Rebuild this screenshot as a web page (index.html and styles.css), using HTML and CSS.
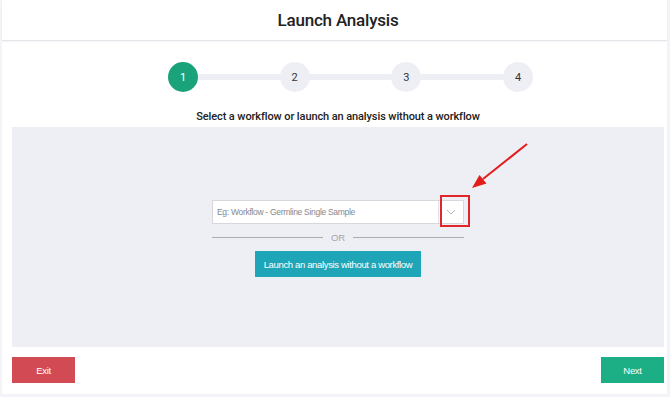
FILE: index.html
```html
<!DOCTYPE html>
<html lang="en">
<head>
    <meta charset="UTF-8">
    <meta name="viewport" content="width=device-width, initial-scale=1.0">
    <title>Launch Analysis</title>
    <link rel="stylesheet" href="styles.css">
</head>

<body>
    <div class="card">
        <div class="header">
            <h1>Launch Analysis</h1>
        </div>

        <div class="steps">
            <div class="track"></div>
            <div class="step active">1</div>
            <div class="step">2</div>
            <div class="step">3</div>
            <div class="step">4</div>
        </div>

        <h2 class="subtitle">Select a workflow or launch an analysis without a workflow</h2>

        <div class="panel">
            <div class="select-wrap">
                <div class="select">
                    <span class="placeholder">Eg: Workflow - Germline Single Sample</span>
                    <span class="caret">
                        <svg width="10" height="6" viewBox="0 0 10 6"><path d="M1 1l4 4 4-4" fill="none" stroke="#b5b8c0" stroke-width="1"/></svg>
                    </span>
                </div>
                <div class="highlight"></div>
            </div>

            <div class="divider"><span>OR</span></div>

            <button class="launch">Launch an analysis without a workflow</button>

            <svg class="arrow" width="70" height="60" viewBox="0 0 70 60">
                <line x1="67" y1="3" x2="23" y2="38" stroke="#e31b1b" stroke-width="2"/>
                <polygon points="12,47 19.5,34 26.5,42.5" fill="#e31b1b"/>
            </svg>
        </div>

        <div class="footer">
            <button class="btn exit">Exit</button>
            <button class="btn next">Next</button>
        </div>
    </div>
</body>

</html>
```

FILE: styles.css
```css
body {
    font-family: Roboto, Arial, sans-serif;
    background-color: #f3f4f8;
    margin: 0;
}

.card {
    background: #fff;
    margin: 0 3px 0 2px;
    height: 394px;
    display: flex;
    flex-direction: column;
}

.header {
    height: 40px;
    padding-left: 7px;
    border-bottom: 1px solid #e3e4ea;
    box-shadow: 0 1px 2px rgba(0, 0, 0, 0.05);
    display: flex;
    justify-content: center;
    align-items: center;
}

.header h1 {
    margin: 0;
    font-size: 17px;
    font-weight: 500;
    color: #222;
    letter-spacing: -0.2px;
}

.steps {
    position: relative;
    width: 365px;
    margin: 21px 0 0 166px;
    display: flex;
    justify-content: space-between;
}

.track {
    position: absolute;
    left: 15px;
    right: 15px;
    top: 12px;
    height: 6px;
    background: #eeeff4;
}

.step {
    position: relative;
    width: 30px;
    height: 30px;
    border-radius: 50%;
    background: #eeeff4;
    color: #333;
    font-size: 11px;
    display: flex;
    justify-content: center;
    align-items: center;
}

.step.active {
    background: #1aa37a;
    color: #fff;
}

.subtitle {
    margin: 18px 0 0;
    padding-left: 7px;
    text-align: center;
    font-size: 11px;
    font-weight: 500;
    color: #222;
    line-height: 14px;
    letter-spacing: -0.1px;
}

.panel {
    position: relative;
    margin: 3px 3px 0 10px;
    height: 220px;
    background: #eeeff4;
    display: flex;
    flex-direction: column;
    align-items: center;
    justify-content: center;
}

.select-wrap {
    position: relative;
    margin-top: 3px;
}

.select {
    width: 250px;
    height: 22px;
    background: #fff;
    border: 1px solid #d6d8de;
    display: flex;
    align-items: center;
}

.placeholder {
    flex: 1;
    padding-left: 4px;
    font-family: "Liberation Sans", Arial, sans-serif;
    font-size: 8.5px;
    letter-spacing: -0.3px;
    color: #858890;
}

.caret {
    width: 24px;
    height: 100%;
    border-left: 1px solid #e0e2e7;
    display: flex;
    justify-content: center;
    align-items: center;
}

.highlight {
    position: absolute;
    left: 228px;
    top: -5px;
    width: 26px;
    height: 28px;
    border: 2px solid #e0262b;
}

.divider {
    width: 252px;
    margin-top: 8px;
    display: flex;
    align-items: center;
    gap: 8px;
    font-family: "Liberation Sans", Arial, sans-serif;
    font-size: 9.5px;
    color: #a2a5ac;
}

.divider::before,
.divider::after {
    content: "";
    flex: 1;
    height: 1px;
    background: #a9acb3;
}

.launch {
    margin-top: 8px;
    width: 166px;
    height: 26px;
    padding: 0;
    white-space: nowrap;
    background: #1fa5b8;
    color: #fff;
    border: none;
    font-family: "Liberation Sans", Arial, sans-serif;
    font-size: 9.5px;
    letter-spacing: -0.35px;
}

.arrow {
    position: absolute;
    left: 448px;
    top: 14px;
}

.footer {
    margin: 10px 3px 0 10px;
    display: flex;
    justify-content: space-between;
}

.btn {
    width: 63px;
    height: 26px;
    padding: 0;
    border: none;
    color: #fff;
    font-family: "Liberation Sans", Arial, sans-serif;
    font-size: 9.5px;
    letter-spacing: -0.3px;
}

.exit {
    background: #d24a53;
}

.next {
    background: #1cae84;
}
```
